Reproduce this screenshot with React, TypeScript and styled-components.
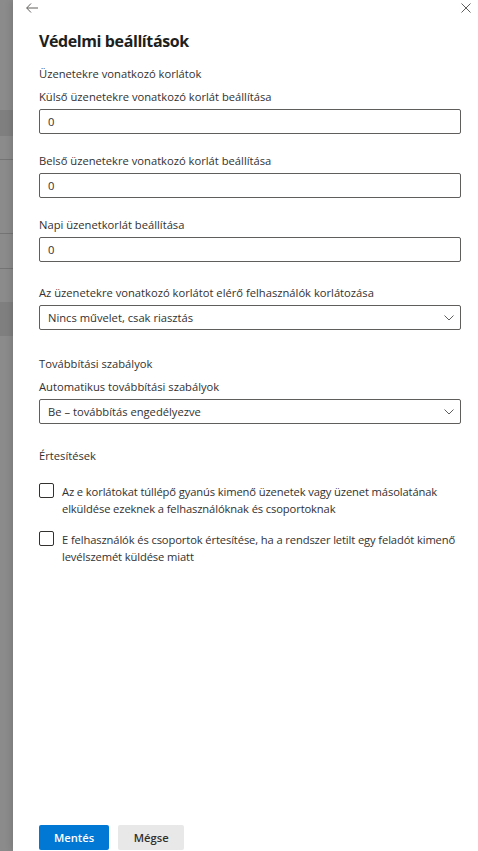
import styled, { createGlobalStyle } from "styled-components";

const GlobalStyle = createGlobalStyle`
  html, body {
    margin: 0;
    padding: 0;
    background: #ffffff;
  }
  body {
    font-family: "Open Sans", "Noto Sans", sans-serif;
    color: #323130;
  }
  * {
    box-sizing: border-box;
  }
`;

type BandProps = { $h: number; $tone?: "light" | "dark" | "line" };

const Page = styled.div`
  display: flex;
  height: 100vh;
  overflow: hidden;
`;

const Backdrop = styled.div`
  width: 13px;
  flex-shrink: 0;
  display: flex;
  flex-direction: column;
  background: #8b8b8b;
`;

const Band = styled.div<BandProps>`
  height: ${(p) => p.$h}px;
  flex-shrink: 0;
  background: ${(p) =>
    p.$tone === "dark" ? "#7f7f7f" : p.$tone === "line" ? "#747474" : "#8b8b8b"};
`;

const Panel = styled.div`
  flex: 1;
  display: flex;
  flex-direction: column;
  background: #ffffff;
  box-shadow: -2px 0 6px rgba(0, 0, 0, 0.12);
`;

const TopBar = styled.div`
  height: 16px;
  display: flex;
  align-items: center;
  justify-content: space-between;
  padding: 0 6px 0 13px;
`;

const IconButton = styled.button`
  border: none;
  background: transparent;
  padding: 0;
  display: flex;
  align-items: center;
  justify-content: center;
  width: 12px;
  height: 12px;
  cursor: pointer;
`;

const Content = styled.div`
  flex: 1;
  display: flex;
  flex-direction: column;
  padding: 0 17px 0 26px;
`;

const Title = styled.h2`
  margin: 14px 0 14px;
  font-size: 16px;
  line-height: 22px;
  font-weight: 700;
  color: #201f1e;
  letter-spacing: -0.4px;
`;

const SectionHeading = styled.div<{ $top?: number; $bottom?: number }>`
  margin-top: ${(p) => p.$top ?? 0}px;
  margin-bottom: ${(p) => p.$bottom ?? 3}px;
  font-size: 11.2px;
  line-height: 16px;
`;

const Field = styled.div<{ $top?: number }>`
  margin-top: ${(p) => p.$top ?? 0}px;
  margin-bottom: 15px;
`;

const Label = styled.label`
  display: block;
  padding: 4px 0;
  font-size: 11.2px;
  line-height: 16px;
  color: #323130;
`;

const Input = styled.input`
  display: block;
  width: 100%;
  height: 25px;
  border: 1px solid #605e5c;
  border-radius: 2px;
  padding: 0 8px;
  font-family: inherit;
  font-size: 11.2px;
  color: #323130;
  background: #ffffff;
  outline: none;
`;

const Select = styled.div`
  display: flex;
  align-items: center;
  justify-content: space-between;
  height: 25px;
  border: 1px solid #605e5c;
  border-radius: 2px;
  padding: 0 6px 0 8px;
  font-size: 11.2px;
  color: #323130;
  cursor: pointer;
`;

const CheckRow = styled.label<{ $top?: number }>`
  display: flex;
  align-items: flex-start;
  margin-top: ${(p) => p.$top ?? 0}px;
  cursor: pointer;
`;

const Box = styled.span`
  width: 15px;
  height: 15px;
  flex-shrink: 0;
  border: 1px solid #323130;
  border-radius: 2px;
  margin: 0 8px 0 0;
`;

const CheckText = styled.span`
  font-size: 11.2px;
  line-height: 17px;
  letter-spacing: -0.12px;
  color: #323130;
`;

const Footer = styled.div`
  display: flex;
  gap: 9px;
  padding: 0 0 1px 26px;
`;

const Button = styled.button<{ $primary?: boolean }>`
  height: 25px;
  min-width: 66px;
  padding: 0 15px;
  border: none;
  border-radius: 2px;
  font-family: inherit;
  font-size: 11.2px;
  font-weight: 600;
  background: ${(p) => (p.$primary ? "#0078d4" : "#e8e8e8")};
  color: ${(p) => (p.$primary ? "#ffffff" : "#323130")};
  cursor: pointer;
`;

const Chevron = () => (
  <svg width="10" height="6" viewBox="0 0 10 6" fill="none">
    <polyline points="0.5,0.5 5,5 9.5,0.5" stroke="#605e5c" strokeWidth="1" />
  </svg>
);

const bands: BandProps[] = [
  { $h: 110 },
  { $h: 26, $tone: "dark" },
  { $h: 23 },
  { $h: 1, $tone: "line" },
  { $h: 73 },
  { $h: 1, $tone: "line" },
  { $h: 34 },
  { $h: 1, $tone: "line" },
  { $h: 33 },
  { $h: 34, $tone: "dark" },
];

export default function App() {
  return (
    <>
      <GlobalStyle />
      <Page>
        <Backdrop>
          {bands.map((b, i) => (
            <Band key={i} $h={b.$h} $tone={b.$tone} />
          ))}
        </Backdrop>
        <Panel>
          <TopBar>
            <IconButton aria-label="Vissza">
              <svg width="12" height="10" viewBox="0 0 12 10" fill="none">
                <path d="M5 0.5 L0.7 5 L5 9.5 M0.7 5 H12" stroke="#605e5c" strokeWidth="1" />
              </svg>
            </IconButton>
            <IconButton aria-label="Bezárás">
              <svg width="10" height="10" viewBox="0 0 10 10" fill="none">
                <path d="M0.5 0.5 L9.5 9.5 M9.5 0.5 L0.5 9.5" stroke="#605e5c" strokeWidth="1" />
              </svg>
            </IconButton>
          </TopBar>
          <Content>
            <Title>Védelmi beállítások</Title>
            <SectionHeading>Üzenetekre vonatkozó korlátok</SectionHeading>
            <Field>
              <Label>Külső üzenetekre vonatkozó korlát beállítása</Label>
              <Input defaultValue="0" />
            </Field>
            <Field>
              <Label>Belső üzenetekre vonatkozó korlát beállítása</Label>
              <Input defaultValue="0" />
            </Field>
            <Field>
              <Label>Napi üzenetkorlát beállítása</Label>
              <Input defaultValue="0" />
            </Field>
            <Field $top={4}>
              <Label>Az üzenetekre vonatkozó korlátot elérő felhasználók korlátozása</Label>
              <Select>
                <span>Nincs művelet, csak riasztás</span>
                <Chevron />
              </Select>
            </Field>
            <SectionHeading $top={11}>Továbbítási szabályok</SectionHeading>
            <Field>
              <Label>Automatikus továbbítási szabályok</Label>
              <Select>
                <span>Be – továbbítás engedélyezve</span>
                <Chevron />
              </Select>
            </Field>
            <SectionHeading $top={9} $bottom={19}>
              Értesítések
            </SectionHeading>
            <CheckRow>
              <Box />
              <CheckText>
                Az e korlátokat túllépő gyanús kimenő üzenetek vagy üzenet másolatának
                elküldése ezeknek a felhasználóknak és csoportoknak
              </CheckText>
            </CheckRow>
            <CheckRow $top={14}>
              <Box />
              <CheckText>
                E felhasználók és csoportok értesítése, ha a rendszer letilt egy feladót
                kimenő levélszemét küldése miatt
              </CheckText>
            </CheckRow>
          </Content>
          <Footer>
            <Button $primary>Mentés</Button>
            <Button>Mégse</Button>
          </Footer>
        </Panel>
      </Page>
    </>
  );
}
